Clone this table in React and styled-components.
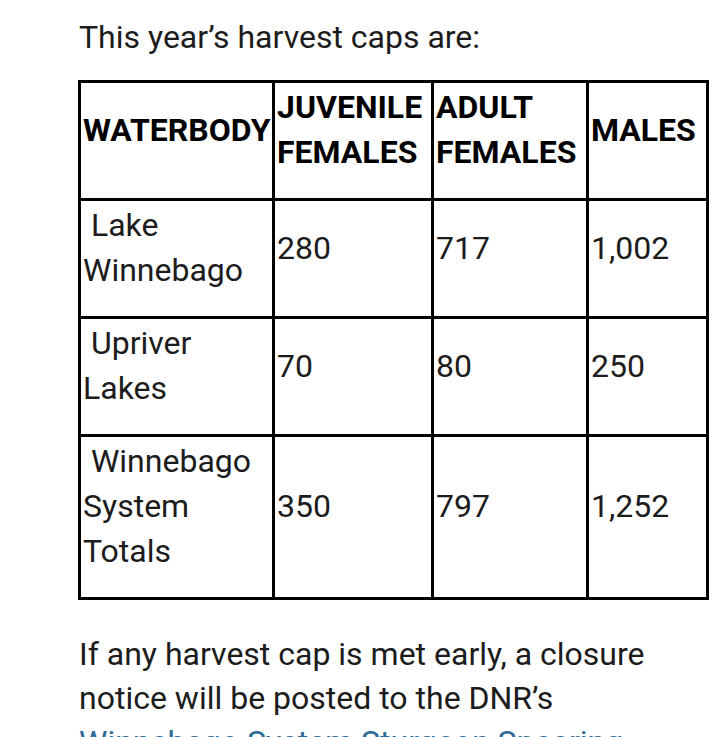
import { createGlobalStyle, styled } from "styled-components"

const GlobalStyle = createGlobalStyle`
  body {
    margin: 0;
    background: #fff;
    font-family: Roboto, "Noto Sans", sans-serif;
    color: #1c1c1c;
  }
`

const StyledArticle = styled.article`
  padding: 15px 11px 0 79px;
  font-size: 32px;
  line-height: 44px;
`

const StyledParagraph = styled.p`
  margin: 0 0 ${props => props.$gap || 0}px;
`

const StyledTable = styled.table`
  border-collapse: collapse;
  table-layout: fixed;
  width: 631px;
  margin-left: -1px;
  margin-bottom: 32px;
`

const StyledCell = styled.td`
  border: 3px solid #000;
  padding: 2px 2px 23px;
  line-height: 45px;
  vertical-align: middle;
  text-align: left;
  font-weight: ${props => props.$head ? 700 : 400};
  color: ${props => props.$head ? '#000' : 'inherit'};
`

const StyledLink = styled.a`
  color: #2d6a98;
  text-decoration: none;
`

const rows = [
  ['\u00a0Lake Winnebago', '280', '717', '1,002'],
  ['\u00a0Upriver Lakes', '70', '80', '250'],
  ['\u00a0Winnebago System Totals', '350', '797', '1,252'],
]

export default function App() {
  return (
    <>
      <GlobalStyle />
      <StyledArticle>
        <StyledParagraph $gap={21}>This year’s harvest caps are:</StyledParagraph>
        <StyledTable>
          <colgroup>
            <col style={{ width: 194 }} />
            <col style={{ width: 159 }} />
            <col style={{ width: 155 }} />
            <col style={{ width: 120 }} />
          </colgroup>
          <tbody>
            <tr>
              <StyledCell as="th" $head>WATERBODY</StyledCell>
              <StyledCell as="th" $head>JUVENILE FEMALES</StyledCell>
              <StyledCell as="th" $head>ADULT FEMALES</StyledCell>
              <StyledCell as="th" $head>MALES</StyledCell>
            </tr>
            {rows.map(row => (
              <tr key={row[0]}>
                {row.map((value, i) => (
                  <StyledCell key={i}>{value}</StyledCell>
                ))}
              </tr>
            ))}
          </tbody>
        </StyledTable>
        <StyledParagraph>
          If any harvest cap is met early, a closure notice will be posted to the DNR’s{' '}
          <StyledLink href="#">Winnebago System Sturgeon Spearing</StyledLink> webpage.
        </StyledParagraph>
      </StyledArticle>
    </>
  )
}
